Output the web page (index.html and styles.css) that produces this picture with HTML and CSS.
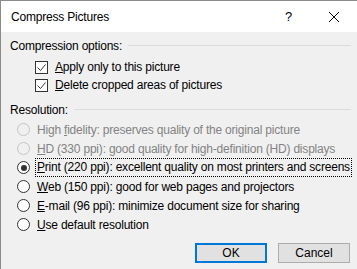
FILE: index.html
```html
<!DOCTYPE html>
<html lang="en">
<head>
  <meta charset="UTF-8" />
  <title>Compress Pictures</title>
  <link rel="stylesheet" href="styles.css">
</head>
<body>

<div class="dialog">
  <div class="titlebar">
    <span class="title">Compress Pictures</span>
    <span class="help">?</span>
    <span class="close">
      <svg width="12" height="12" viewBox="0 0 12 12"><path d="M1 1 L11 11 M11 1 L1 11" stroke="#000" stroke-width="1" fill="none"/></svg>
    </span>
  </div>

  <div class="content">
    <!-- compression options -->
    <div class="group-head"><span>Compression options:</span><span class="rule"></span></div>
    <div class="checks">
      <label class="check-row">
        <span class="box"><svg width="11" height="11" viewBox="0 0 11 11"><path d="M1.5 5.5 L4.5 8.5 L9.5 2.5" stroke="#333" stroke-width="1" fill="none"/></svg></span>
        <span><u>A</u>pply only to this picture</span>
      </label>
      <label class="check-row">
        <span class="box"><svg width="11" height="11" viewBox="0 0 11 11"><path d="M1.5 5.5 L4.5 8.5 L9.5 2.5" stroke="#333" stroke-width="1" fill="none"/></svg></span>
        <span><u>D</u>elete cropped areas of pictures</span>
      </label>
    </div>

    <!-- resolution -->
    <div class="group-head second"><span>Resolution:</span><span class="rule"></span></div>
    <div class="radios">
      <label class="radio-row disabled"><span class="dot"></span><span>High <u>f</u>idelity: preserves quality of the original picture</span></label>
      <label class="radio-row disabled"><span class="dot"></span><span><u>H</u>D (330 ppi): good quality for high-definition (HD) displays</span></label>
      <label class="radio-row checked"><span class="dot"></span><span class="focus"><u>P</u>rint (220 ppi): excellent quality on most printers and screens</span></label>
      <label class="radio-row"><span class="dot"></span><span><u>W</u>eb (150 ppi): good for web pages and projectors</span></label>
      <label class="radio-row"><span class="dot"></span><span><u>E</u>-mail (96 ppi): minimize document size for sharing</span></label>
      <label class="radio-row"><span class="dot"></span><span><u>U</u>se default resolution</span></label>
    </div>

    <div class="buttons">
      <button class="btn default">OK</button>
      <button class="btn">Cancel</button>
    </div>
  </div>
</div>

</body>
</html>
```

FILE: styles.css
```css
body {
  margin: 0;
  font-family: "Liberation Sans", Arial, sans-serif;
  font-size: 12px;
  letter-spacing: -0.2px;
  color: #000;
  background: #f0f0f0;
}

.dialog {
  width: 357px;
  height: 269px;
  box-sizing: border-box;
  border-top: 1px solid #8a8a8a;
  border-left: 1px solid #8a8a8a;
  background: #f0f0f0;
  overflow: hidden;
}

.titlebar {
  height: 31px;
  background: #fff;
  display: flex;
  align-items: center;
}

.title {
  margin-left: 10px;
  flex: 1;
}

.help {
  font-size: 13px;
  margin-right: 36px;
}

.close {
  display: flex;
  margin-right: 17px;
}

.content {
  padding: 4px 6px 0 9px;
}

.group-head {
  display: flex;
  align-items: center;
  height: 19px;
}

.group-head.second {
  margin-top: 6px;
}

.rule {
  flex: 1;
  height: 1px;
  background: #dcdcdc;
  margin-left: 6px;
}

.checks {
  margin-top: 3px;
}

.check-row {
  display: flex;
  align-items: center;
  height: 18px;
  padding-left: 25px;
}

.box {
  width: 11px;
  height: 11px;
  border: 1px solid #333;
  background: #fff;
  margin-right: 7px;
  display: flex;
}

.radios {
  margin-top: 1px;
}

.radio-row {
  display: flex;
  align-items: center;
  height: 19px;
  padding-left: 7px;
}

.dot {
  width: 11px;
  height: 11px;
  border: 1px solid #333;
  border-radius: 50%;
  background: #fff;
  margin-right: 7px;
  position: relative;
  flex-shrink: 0;
}

.radio-row.checked .dot::after {
  content: "";
  position: absolute;
  left: 2.5px;
  top: 2.5px;
  width: 6px;
  height: 6px;
  border-radius: 50%;
  background: #333;
}

.radio-row.disabled {
  color: #838383;
}

.radio-row.disabled .dot {
  border-color: #c4c4c4;
  background: #f0f0f0;
}

.focus {
  border: 1px dotted #000;
  padding: 0 1px;
  margin-left: -2px;
  line-height: 17px;
  white-space: nowrap;
}

.buttons {
  display: flex;
  justify-content: flex-end;
  gap: 11px;
  margin-top: 9px;
  padding-right: 1px;
}

.btn {
  width: 72px;
  height: 20px;
  box-sizing: border-box;
  font-family: inherit;
  font-size: 12px;
  background: #e1e1e1;
  border: 1px solid #adadad;
  padding: 0;
  color: #000;
}

.btn.default {
  border: 2px solid #0078d7;
}
```
